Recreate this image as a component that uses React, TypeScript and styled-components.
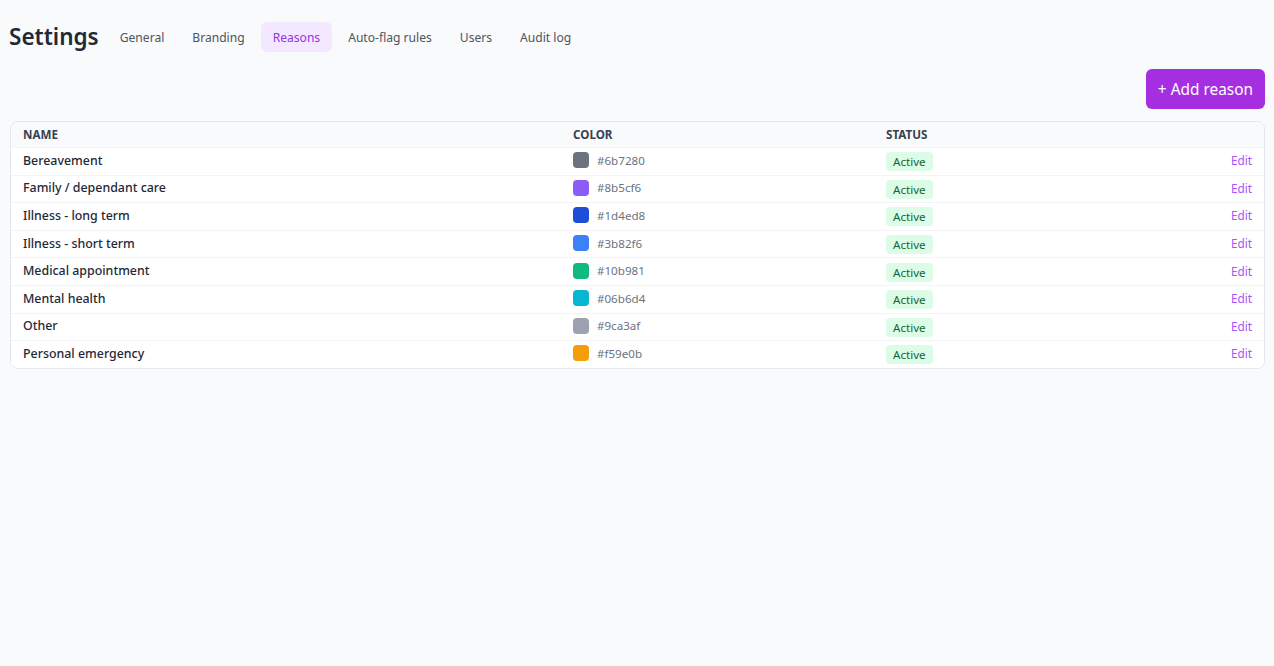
import React from "react";
import styled, { createGlobalStyle } from "styled-components";

const GlobalStyle = createGlobalStyle`
  html, body {
    margin: 0;
    padding: 0;
    background: #f9fafb;
    font-family: "Noto Sans", "Open Sans", sans-serif;
    color: #1f2937;
  }
`;

interface Reason {
  name: string;
  color: string;
}

const reasons: Reason[] = [
  { name: "Bereavement", color: "#6b7280" },
  { name: "Family / dependant care", color: "#8b5cf6" },
  { name: "Illness - long term", color: "#1d4ed8" },
  { name: "Illness - short term", color: "#3b82f6" },
  { name: "Medical appointment", color: "#10b981" },
  { name: "Mental health", color: "#06b6d4" },
  { name: "Other", color: "#9ca3af" },
  { name: "Personal emergency", color: "#f59e0b" },
];

const tabs = ["General", "Branding", "Reasons", "Auto-flag rules", "Users", "Audit log"];

const Page = styled.div`
  padding: 22px 9px 10px 10px;
`;

const Header = styled.header`
  display: flex;
  align-items: center;
  gap: 9px;
`;

const Title = styled.h1`
  margin: 0 0 0 -1px;
  font-size: 22.5px;
  font-weight: 600;
  color: #1f2937;
  line-height: 30px;
`;

const Tabs = styled.nav`
  display: flex;
  gap: 4px;
`;

const Tab = styled.button<{ $active?: boolean }>`
  border: none;
  font-family: inherit;
  font-size: 12.1px;
  height: 30px;
  padding: 0 12px;
  border-radius: 6px;
  cursor: pointer;
  background: ${(p) => (p.$active ? "#f3e8ff" : "transparent")};
  color: ${(p) => (p.$active ? "#9333ea" : "#4b5563")};
`;

const Toolbar = styled.div`
  display: flex;
  justify-content: flex-end;
  margin: 17px 0 12px;
`;

const AddButton = styled.button`
  border: none;
  background: #a42ee0;
  color: #ffffff;
  font-family: inherit;
  font-size: 15.4px;
  height: 40px;
  padding: 0 12px;
  border-radius: 6px;
  cursor: pointer;
`;

const Card = styled.div`
  background: #ffffff;
  border: 1px solid #e5e7eb;
  border-radius: 8px;
  overflow: hidden;
`;

const Row = styled.div<{ $head?: boolean }>`
  display: grid;
  grid-template-columns: 550px 313px 1fr auto;
  align-items: center;
  box-sizing: border-box;
  padding: 0 12px 2px;
  height: ${(p) => (p.$head ? "25px" : "27.6px")};
  background: ${(p) => (p.$head ? "#f9fafb" : "#ffffff")};
  & + & {
    border-top: 1px solid #f3f4f6;
  }
`;

const HeadCell = styled.div`
  font-size: 11.6px;
  font-weight: 700;
  text-transform: uppercase;
  color: #374151;
  padding-top: 1px;
`;

const NameCell = styled.div`
  font-size: 12.4px;
  font-weight: 500;
  color: #1f2937;
`;

const ColorCell = styled.div`
  display: flex;
  align-items: center;
  gap: 8px;
  font-size: 11.6px;
  color: #6b7280;
`;

const Swatch = styled.span<{ $color: string }>`
  width: 16px;
  height: 16px;
  border-radius: 4px;
  background: ${(p) => p.$color};
`;

const Badge = styled.span`
  display: inline-block;
  font-size: 11.6px;
  line-height: 19px;
  padding: 0 7px;
  border-radius: 4px;
  background: #dcfce7;
  color: #166534;
`;

const EditLink = styled.a`
  font-size: 11.8px;
  color: #a855f7;
  cursor: pointer;
  text-decoration: none;
`;

export default function App() {
  return (
    <Page>
      <GlobalStyle />
      <Header>
        <Title>Settings</Title>
        <Tabs>
          {tabs.map((t) => (
            <Tab key={t} $active={t === "Reasons"}>
              {t}
            </Tab>
          ))}
        </Tabs>
      </Header>
      <Toolbar>
        <AddButton>+ Add reason</AddButton>
      </Toolbar>
      <Card>
        <Row $head>
          <HeadCell>Name</HeadCell>
          <HeadCell>Color</HeadCell>
          <HeadCell>Status</HeadCell>
          <div />
        </Row>
        {reasons.map((r) => (
          <Row key={r.name}>
            <NameCell>{r.name}</NameCell>
            <ColorCell>
              <Swatch $color={r.color} />
              {r.color}
            </ColorCell>
            <div>
              <Badge>Active</Badge>
            </div>
            <EditLink>Edit</EditLink>
          </Row>
        ))}
      </Card>
    </Page>
  );
}
